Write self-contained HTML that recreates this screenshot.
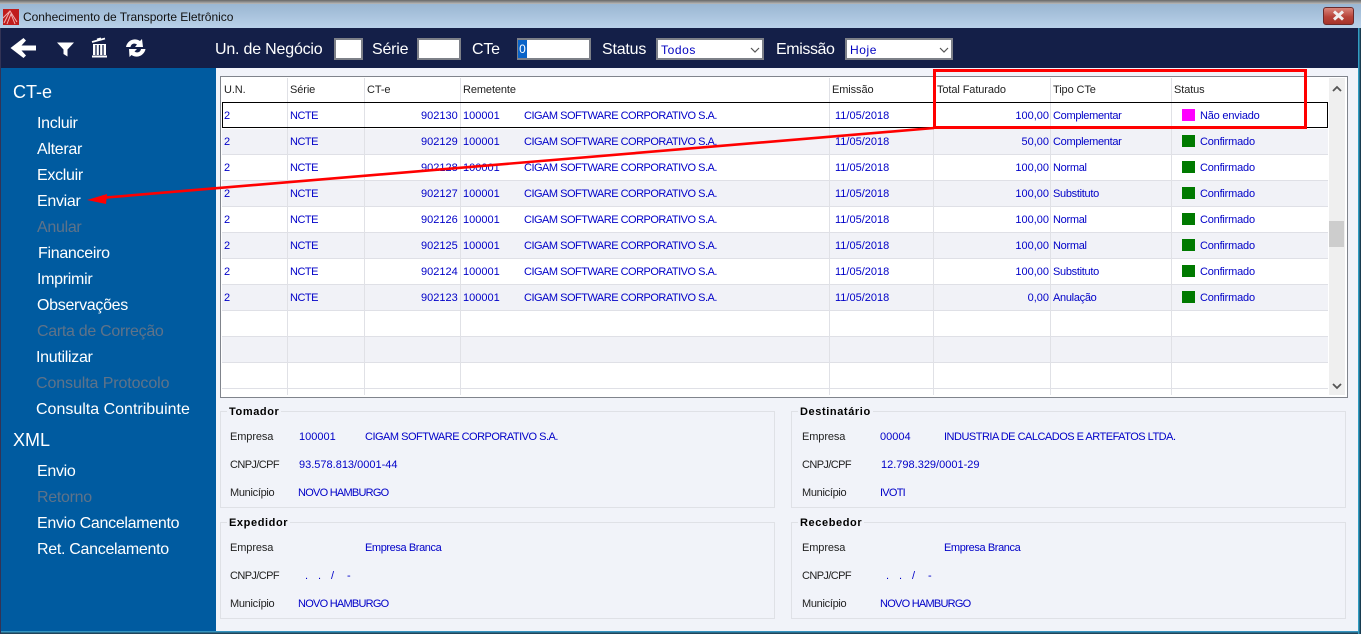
<!DOCTYPE html>
<html lang="pt"><head><meta charset="utf-8"><title>Conhecimento de Transporte Eletrônico</title>
<style>
html,body{margin:0;padding:0;width:1361px;height:634px;overflow:hidden;background:#f1f3f9}
body{position:relative;font-family:"Liberation Sans",sans-serif}
div,span{position:absolute;white-space:nowrap}
.m{left:37px;font-size:16px;line-height:20px;color:#fff;letter-spacing:-.3px}
.d{color:#5f7389}
.h{line-height:20px;left:13px;color:#fff;font-size:18px}
.t{font-size:16px;line-height:20px;color:#fff;top:40px;letter-spacing:-.2px}
.i{background:#fff;border:2px solid #7d8088;height:18px;top:38px}
.v{color:#0000c0;font-size:12px;top:42px;line-height:16px;letter-spacing:.6px}
.c{font-size:11px;line-height:14px;color:#222;letter-spacing:-.1px}
.f{letter-spacing:-.6px}
.b{font-size:11px;line-height:14px;color:#0000c8}
.u{letter-spacing:-.5px}
.o{letter-spacing:-.75px}
.w{letter-spacing:-.3px}
.r{left:222px;width:1106px;height:25px;border-bottom:1px solid #dfe0e6}
.a{background:#f1f2f7}
.l{top:78px;width:1px;height:317px;background:#e0e1e6}
.g{border:1px solid #dfe1e6;width:553px;height:95px}
.n{font-size:11px;line-height:14px;font-weight:bold;color:#000;background:#f1f3f9;padding:0 2px;letter-spacing:.6px}
.s{left:1182px;width:13px;height:12px;background:#007a00}
</style></head><body>
<div style="left:0;top:0;width:1361px;height:4px;background:linear-gradient(#666,#bbb)"></div>
<div style="left:0;top:4px;width:1361px;height:24px;background:linear-gradient(#9ab6d2,#b9d1e9)"></div>
<svg style="position:absolute;left:3px;top:9px" width="16" height="16" viewBox="0 0 16 16"><rect width="16" height="16" fill="#c01c1c"/><path d="M1 14 7 2l7 11M4 15 8 5l4 10M0 9l7-7" fill="none" stroke="#f2b0b0" stroke-width="1"/></svg>
<div style="left:23px;top:10px;font-size:12px;line-height:15px;color:#111;letter-spacing:-.03px">Conhecimento de Transporte Eletrônico</div>
<div style="left:1323px;top:7px;width:31px;height:18px;box-sizing:border-box;border:1px solid #6b2a2a;border-radius:3px;background:linear-gradient(#d9867c,#b8443a 55%,#a5332a)"></div>
<svg style="position:absolute;left:1331px;top:10px" width="15" height="11" viewBox="0 0 15 11"><path d="M3 1.500 12 9.500M12 1.500 3 9.500" stroke="#f0eeee" stroke-width="3"/></svg>

<div style="left:1px;top:28px;width:1357px;height:40px;background:#141f48"></div>
<svg style="position:absolute;left:10px;top:37px" width="27" height="22" viewBox="0 0 27 22"><path d="M26 8.500H11.500L16 3.500 13.500 1 .5 11 13.500 21 16 18.500 11.500 13.500H26z" fill="#fff"/></svg>
<svg style="position:absolute;left:56px;top:41px" width="19" height="17" viewBox="0 0 19 17"><path d="M1 1.500H18L11.500 8.500V15.500L7.500 13V8.500z" fill="#fff"/></svg>
<svg style="position:absolute;left:91px;top:37px" width="17" height="21" viewBox="0 0 17 21"><path d="M1 5 14 1.500M6 2.500l4-1.200" stroke="#fff" stroke-width="1.800"/><path d="M2 7H15V18H2z" fill="#fff"/><path d="M5 8v10M8.500 8v10M12 8v10" stroke="#141f48" stroke-width="1.300"/><path d="M1 19.500H16" stroke="#fff" stroke-width="2"/></svg>
<svg style="position:absolute;left:126px;top:38px" width="20" height="20" viewBox="0 0 20 20"><path d="M0 9C1 3 8-1 14 3L16 1 17 9 9 9 11 6.500C8 4.500 5 6 4.500 9z" fill="#fff"/><path d="M19.500 11C18.500 17 11.500 21 5.500 17L3.500 19 3 11 11 11 8.500 13.500C11.500 15.500 14.500 14 15 11z" fill="#fff"/></svg>

<div class="t" style="left:215px">Un. de Negócio</div><div class="i" style="left:334px;width:25px"></div>
<div class="t" style="left:372px">Série</div><div class="i" style="left:417px;width:40px"></div>
<div class="t" style="left:472px">CTe</div><div class="i" style="left:517px;width:70px"></div>
<div style="left:518px;top:40px;width:9px;height:18px;background:#0a64c8;color:#fff;font-size:12px;line-height:18px;text-align:center">0</div>
<div class="t" style="left:602px">Status</div><div class="i" style="left:656px;width:104px"></div><div class="v" style="left:661px">Todos</div>
<div class="t" style="left:776px;letter-spacing:-.4px">Emissão</div><div class="i" style="left:845px;width:104px"></div><div class="v" style="left:850px">Hoje</div>
<svg style="position:absolute;left:750px;top:47px" width="10" height="6"><path d="M1 1l4 4 4-4" fill="none" stroke="#555" stroke-width="1.200"/></svg>
<svg style="position:absolute;left:939px;top:47px" width="10" height="6"><path d="M1 1l4 4 4-4" fill="none" stroke="#555" stroke-width="1.200"/></svg>

<div style="left:1px;top:68px;width:215px;height:563px;background:#005ba0"></div>
<div class="h" style="top:82px">CT-e</div>
<div class="m" style="top:114px">Incluir</div>
<div class="m" style="top:140px">Alterar</div>
<div class="m" style="top:166px">Excluir</div>
<div class="m" style="top:192px">Enviar</div>
<div class="m d" style="top:218px">Anular</div>
<div class="m" style="top:244px;left:38px">Financeiro</div>
<div class="m" style="top:270px">Imprimir</div>
<div class="m" style="top:296px">Observações</div>
<div class="m d" style="top:322px">Carta de Correção</div>
<div class="m" style="top:348px;left:36px">Inutilizar</div>
<div class="m d" style="top:374px;left:36px;letter-spacing:-.1px">Consulta Protocolo</div>
<div class="m" style="top:400px;left:36px;letter-spacing:0">Consulta Contribuinte</div>
<div class="h" style="top:430px">XML</div>
<div class="m" style="top:462px">Envio</div>
<div class="m d" style="top:488px">Retorno</div>
<div class="m" style="top:514px">Envio Cancelamento</div>
<div class="m" style="top:540px">Ret. Cancelamento</div>

<div style="left:220px;top:76px;width:1126px;height:320px;border:1px solid #80848c;background:#fff"></div>
<div class="r" style="top:129px;background:#f1f2f7"></div>
<div class="r" style="top:155px"></div>
<div class="r a" style="top:181px"></div>
<div class="r" style="top:207px"></div>
<div class="r a" style="top:233px"></div>
<div class="r" style="top:259px"></div>
<div class="r a" style="top:285px"></div>
<div class="r" style="top:311px"></div>
<div class="r a" style="top:337px"></div>
<div class="r" style="top:363px"></div>
<div class="l" style="left:287px"></div><div class="l" style="left:364px"></div><div class="l" style="left:460px"></div><div class="l" style="left:829px"></div><div class="l" style="left:933px"></div><div class="l" style="left:1050px"></div><div class="l" style="left:1171px"></div>
<div style="left:222px;top:102px;width:1104px;height:24px;border:1px solid #000"></div>
<div style="left:1329px;top:78px;width:16px;height:317px;background:#efefef"></div>
<div style="left:1329px;top:221px;width:15px;height:26px;background:#cdcdcd"></div>
<svg style="position:absolute;left:1332px;top:85px" width="10" height="7"><path d="M1 6l4-4 4 4" fill="none" stroke="#555" stroke-width="1.800"/></svg>
<svg style="position:absolute;left:1332px;top:383px" width="10" height="7"><path d="M1 1l4 4 4-4" fill="none" stroke="#555" stroke-width="1.800"/></svg>

<div class="c" style="left:224px;top:83px">U.N.</div><div class="c" style="left:290px;top:83px">Série</div><div class="c" style="left:367px;top:83px">CT-e</div><div class="c" style="left:463px;top:83px">Remetente</div><div class="c" style="left:832px;top:83px">Emissão</div><div class="c" style="left:937px;top:83px">Total Faturado</div><div class="c" style="left:1053px;top:83px">Tipo CTe</div><div class="c" style="left:1174px;top:83px">Status</div>

<div class="b" style="left:224px;top:109px">2</div><div class="b u" style="left:290px;top:109px">NCTE</div><div class="b" style="left:421px;top:109px">902130</div><div class="b" style="left:463px;top:109px">100001</div><div class="b u" style="left:524px;top:109px">CIGAM SOFTWARE CORPORATIVO S.A.</div><div class="b" style="left:835px;top:109px">11/05/2018</div><div class="b" style="right:312px;top:109px">100,00</div><div class="b w" style="left:1053px;top:109px">Complementar</div><div class="s" style="top:109px;background:#f0f"></div><div class="b w" style="left:1200px;top:109px;letter-spacing:-.2px">Não enviado</div>
<div class="b" style="left:224px;top:135px">2</div><div class="b u" style="left:290px;top:135px">NCTE</div><div class="b" style="left:421px;top:135px">902129</div><div class="b" style="left:463px;top:135px">100001</div><div class="b u" style="left:524px;top:135px">CIGAM SOFTWARE CORPORATIVO S.A.</div><div class="b" style="left:835px;top:135px">11/05/2018</div><div class="b" style="right:312px;top:135px">50,00</div><div class="b w" style="left:1053px;top:135px">Complementar</div><div class="s" style="top:135px"></div><div class="b w" style="left:1200px;top:135px;letter-spacing:-.2px">Confirmado</div>
<div class="b" style="left:224px;top:161px">2</div><div class="b u" style="left:290px;top:161px">NCTE</div><div class="b" style="left:421px;top:161px">902128</div><div class="b" style="left:463px;top:161px">100001</div><div class="b u" style="left:524px;top:161px">CIGAM SOFTWARE CORPORATIVO S.A.</div><div class="b" style="left:835px;top:161px">11/05/2018</div><div class="b" style="right:312px;top:161px">100,00</div><div class="b w" style="left:1053px;top:161px">Normal</div><div class="s" style="top:161px"></div><div class="b w" style="left:1200px;top:161px;letter-spacing:-.2px">Confirmado</div>
<div class="b" style="left:224px;top:187px">2</div><div class="b u" style="left:290px;top:187px">NCTE</div><div class="b" style="left:421px;top:187px">902127</div><div class="b" style="left:463px;top:187px">100001</div><div class="b u" style="left:524px;top:187px">CIGAM SOFTWARE CORPORATIVO S.A.</div><div class="b" style="left:835px;top:187px">11/05/2018</div><div class="b" style="right:312px;top:187px">100,00</div><div class="b w" style="left:1053px;top:187px">Substituto</div><div class="s" style="top:187px"></div><div class="b w" style="left:1200px;top:187px;letter-spacing:-.2px">Confirmado</div>
<div class="b" style="left:224px;top:213px">2</div><div class="b u" style="left:290px;top:213px">NCTE</div><div class="b" style="left:421px;top:213px">902126</div><div class="b" style="left:463px;top:213px">100001</div><div class="b u" style="left:524px;top:213px">CIGAM SOFTWARE CORPORATIVO S.A.</div><div class="b" style="left:835px;top:213px">11/05/2018</div><div class="b" style="right:312px;top:213px">100,00</div><div class="b w" style="left:1053px;top:213px">Normal</div><div class="s" style="top:213px"></div><div class="b w" style="left:1200px;top:213px;letter-spacing:-.2px">Confirmado</div>
<div class="b" style="left:224px;top:239px">2</div><div class="b u" style="left:290px;top:239px">NCTE</div><div class="b" style="left:421px;top:239px">902125</div><div class="b" style="left:463px;top:239px">100001</div><div class="b u" style="left:524px;top:239px">CIGAM SOFTWARE CORPORATIVO S.A.</div><div class="b" style="left:835px;top:239px">11/05/2018</div><div class="b" style="right:312px;top:239px">100,00</div><div class="b w" style="left:1053px;top:239px">Normal</div><div class="s" style="top:239px"></div><div class="b w" style="left:1200px;top:239px;letter-spacing:-.2px">Confirmado</div>
<div class="b" style="left:224px;top:265px">2</div><div class="b u" style="left:290px;top:265px">NCTE</div><div class="b" style="left:421px;top:265px">902124</div><div class="b" style="left:463px;top:265px">100001</div><div class="b u" style="left:524px;top:265px">CIGAM SOFTWARE CORPORATIVO S.A.</div><div class="b" style="left:835px;top:265px">11/05/2018</div><div class="b" style="right:312px;top:265px">100,00</div><div class="b w" style="left:1053px;top:265px">Substituto</div><div class="s" style="top:265px"></div><div class="b w" style="left:1200px;top:265px;letter-spacing:-.2px">Confirmado</div>
<div class="b" style="left:224px;top:291px">2</div><div class="b u" style="left:290px;top:291px">NCTE</div><div class="b" style="left:421px;top:291px">902123</div><div class="b" style="left:463px;top:291px">100001</div><div class="b u" style="left:524px;top:291px">CIGAM SOFTWARE CORPORATIVO S.A.</div><div class="b" style="left:835px;top:291px">11/05/2018</div><div class="b" style="right:312px;top:291px">0,00</div><div class="b w" style="left:1053px;top:291px">Anulação</div><div class="s" style="top:291px"></div><div class="b w" style="left:1200px;top:291px;letter-spacing:-.2px">Confirmado</div>

<div class="g" style="left:220px;top:411px"></div><div class="n" style="left:227px;top:405px">Tomador</div>
<div class="c" style="left:230px;top:430px">Empresa</div><div class="b" style="left:299px;top:430px">100001</div><div class="b u" style="left:365px;top:430px">CIGAM SOFTWARE CORPORATIVO S.A.</div>
<div class="c f" style="left:230px;top:458px">CNPJ/CPF</div><div class="b" style="left:299px;top:458px">93.578.813/0001-44</div>
<div class="c w" style="left:230px;top:486px">Município</div><div class="b o" style="left:298px;top:486px">NOVO HAMBURGO</div>

<div class="g" style="left:220px;top:522px"></div><div class="n" style="left:227px;top:516px">Expedidor</div>
<div class="c" style="left:230px;top:541px">Empresa</div><div class="b w" style="left:365px;top:541px;letter-spacing:-.4px">Empresa Branca</div>
<div class="c f" style="left:230px;top:569px">CNPJ/CPF</div><div class="b" style="left:305px;top:569px">.</div><div class="b" style="left:318px;top:569px">.</div><div class="b" style="left:331px;top:569px">/</div><div class="b" style="left:347px;top:569px">-</div>
<div class="c w" style="left:230px;top:597px">Município</div><div class="b o" style="left:298px;top:597px">NOVO HAMBURGO</div>

<div class="g" style="left:791px;top:411px"></div><div class="n" style="left:798px;top:405px">Destinatário</div>
<div class="c" style="left:802px;top:430px">Empresa</div><div class="b" style="left:880px;top:430px">00004</div><div class="b u" style="left:944px;top:430px">INDUSTRIA DE CALCADOS E ARTEFATOS LTDA.</div>
<div class="c f" style="left:802px;top:458px">CNPJ/CPF</div><div class="b" style="left:881px;top:458px">12.798.329/0001-29</div>
<div class="c w" style="left:802px;top:486px">Município</div><div class="b o" style="left:880px;top:486px">IVOTI</div>

<div class="g" style="left:791px;top:522px"></div><div class="n" style="left:798px;top:516px">Recebedor</div>
<div class="c" style="left:802px;top:541px">Empresa</div><div class="b w" style="left:944px;top:541px;letter-spacing:-.4px">Empresa Branca</div>
<div class="c f" style="left:802px;top:569px">CNPJ/CPF</div><div class="b" style="left:886px;top:569px">.</div><div class="b" style="left:899px;top:569px">.</div><div class="b" style="left:912px;top:569px">/</div><div class="b" style="left:928px;top:569px">-</div>
<div class="c w" style="left:802px;top:597px">Município</div><div class="b o" style="left:880px;top:597px">NOVO HAMBURGO</div>

<svg style="position:absolute;left:0;top:0" width="1361" height="634" viewBox="0 0 1361 634">
<rect x="934.500" y="70.500" width="371" height="57" fill="none" stroke="#f00" stroke-width="3"/>
<path d="M934 128 100 198" stroke="#f00" stroke-width="2.600"/>
<path d="M87 200 107 194 106 204z" fill="#f00"/>
</svg>

<div style="left:0;top:631px;width:1361px;height:3px;background:linear-gradient(#3aa8d8,#1a3040)"></div>
<div style="left:1358px;top:28px;width:3px;height:606px;background:linear-gradient(90deg,#38b6e0,#123)"></div>
<div style="left:0;top:28px;width:1px;height:606px;background:#335"></div>
</body></html>
